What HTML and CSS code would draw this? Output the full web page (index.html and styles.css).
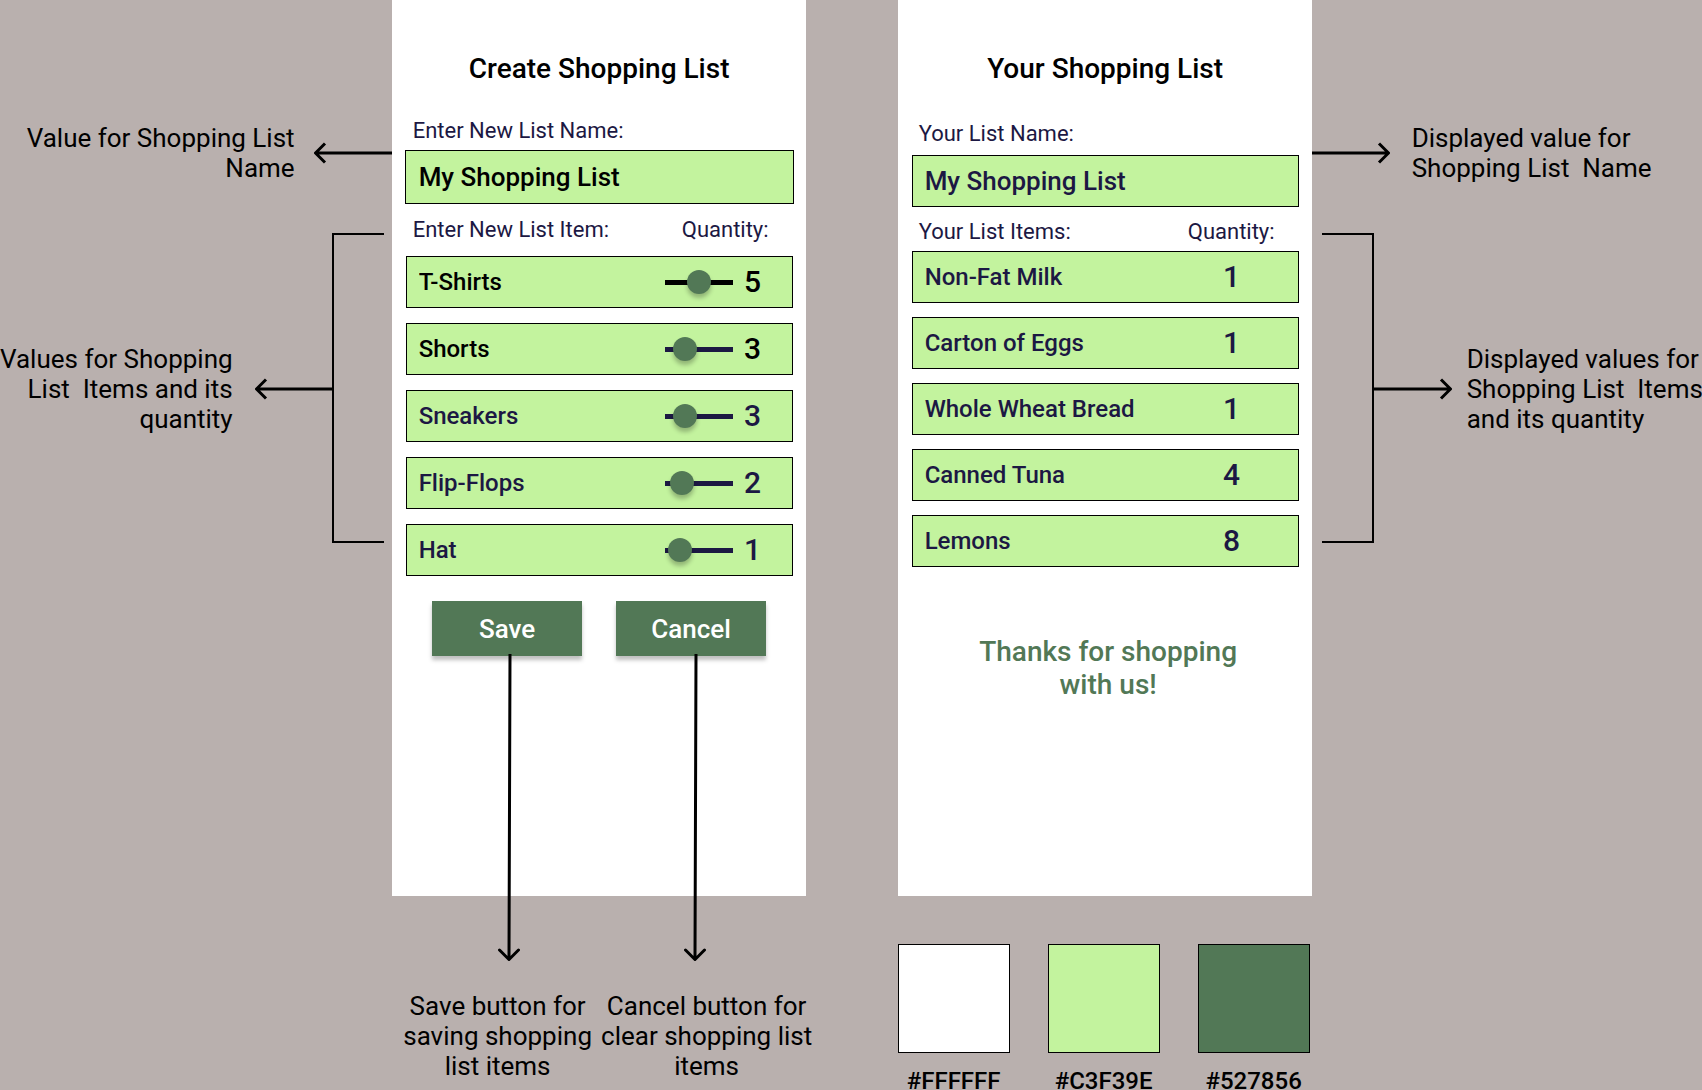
FILE: index.html
```html
<!DOCTYPE html>
<html lang="en">
<head>
<meta charset="utf-8">
<meta name="viewport" content="width=device-width, initial-scale=1">
<title>Shopping List Wireframe</title>
<link rel="stylesheet" href="styles.css">
</head>
<body>
<main class="board">
  <aside class="notes notes-left">
    <div class="note note-name">
      <p class="note-text">Value for Shopping List<br>Name</p>
      <svg class="arrow" width="78" height="24" viewBox="0 0 78 24" aria-hidden="true"><path d="M78 12H2M11 2.500L1.500 12L11 21.500"/></svg>
    </div>
    <div class="note note-items">
      <p class="note-text">Values for Shopping<br>List&nbsp; Items and its<br>quantity</p>
      <svg class="arrow" width="77" height="24" viewBox="0 0 77 24" aria-hidden="true"><path d="M77 12H2M11 2.500L1.500 12L11 21.500"/></svg>
      <div class="bracket"></div>
    </div>
  </aside>

  <form class="screen">
    <h1 class="screen-title">Create Shopping List</h1>
    <label class="caption caption-name" for="list-name">Enter New List Name:</label>
    <input class="field field-name" id="list-name" type="text" value="My Shopping List">
    <div class="caption caption-items"><span>Enter New List Item:</span><span>Quantity:</span></div>
    <ul class="items">
      <li class="item item-active track-active">
        <input class="item-name" type="text" value="T-Shirts" aria-label="Item 1">
        <input class="slider" id="q1" type="range" min="0" max="10" value="5" aria-label="T-Shirts quantity">
        <output class="count" for="q1">5</output>
      </li>
      <li class="item item-active">
        <input class="item-name" type="text" value="Shorts" aria-label="Item 2">
        <input class="slider" id="q2" type="range" min="0" max="15" value="3" aria-label="Shorts quantity">
        <output class="count" for="q2">3</output>
      </li>
      <li class="item">
        <input class="item-name" type="text" value="Sneakers" aria-label="Item 3">
        <input class="slider" id="q3" type="range" min="0" max="15" value="3" aria-label="Sneakers quantity">
        <output class="count" for="q3">3</output>
      </li>
      <li class="item">
        <input class="item-name" type="text" value="Flip-Flops" aria-label="Item 4">
        <input class="slider" id="q4" type="range" min="0" max="15" value="2" aria-label="Flip-Flops quantity">
        <output class="count" for="q4">2</output>
      </li>
      <li class="item">
        <input class="item-name" type="text" value="Hat" aria-label="Item 5">
        <input class="slider" id="q5" type="range" min="0" max="15" value="1" aria-label="Hat quantity">
        <output class="count" for="q5">1</output>
      </li>
    </ul>
    <div class="actions">
      <button class="button" type="button">Save</button>
      <button class="button" type="button">Cancel</button>
    </div>
    <svg class="connectors" width="414" height="310" viewBox="0 0 414 310" aria-hidden="true">
      <path d="M118 0L117 305M107.500 296L117 305.500L126.500 296"/>
      <path d="M304 0L303 305M293.500 296L303 305.500L312.500 296"/>
    </svg>
  </form>

  <section class="screen screen-view">
    <h1 class="screen-title">Your Shopping List</h1>
    <p class="caption caption-name">Your List Name:</p>
    <p class="field">My Shopping List</p>
    <div class="caption caption-items"><span>Your List Items:</span><span>Quantity:</span></div>
    <ul class="items">
      <li class="item"><span class="item-name">Non-Fat Milk</span><span class="count">1</span></li>
      <li class="item"><span class="item-name">Carton of Eggs</span><span class="count">1</span></li>
      <li class="item"><span class="item-name">Whole Wheat Bread</span><span class="count">1</span></li>
      <li class="item"><span class="item-name">Canned Tuna</span><span class="count">4</span></li>
      <li class="item"><span class="item-name">Lemons</span><span class="count">8</span></li>
    </ul>
    <p class="thanks">Thanks for shopping<br>with us!</p>
  </section>

  <aside class="notes notes-right">
    <div class="note note-name">
      <svg class="arrow" width="78" height="24" viewBox="0 0 78 24" aria-hidden="true"><path d="M0 12H76M67 2.500L76.500 12L67 21.500"/></svg>
      <p class="note-text">Displayed value for<br>Shopping List&nbsp; Name</p>
    </div>
    <div class="note note-items">
      <div class="bracket"></div>
      <svg class="arrow" width="78" height="24" viewBox="0 0 78 24" aria-hidden="true"><path d="M0 12H76M67 2.500L76.500 12L67 21.500"/></svg>
      <p class="note-text">Displayed values for<br>Shopping List&nbsp; Items<br>and its quantity</p>
    </div>
  </aside>

  <div class="button-notes">
    <p class="note-text">Save button for saving shopping list items</p>
    <p class="note-text">Cancel button for clear shopping list items</p>
  </div>

  <div class="palette">
    <figure class="swatch"><div class="chip chip-white"></div><figcaption>#FFFFFF</figcaption></figure>
    <figure class="swatch"><div class="chip chip-lime"></div><figcaption>#C3F39E</figcaption></figure>
    <figure class="swatch"><div class="chip chip-green"></div><figcaption>#527856</figcaption></figure>
  </div>
</main>
</body>
</html>
```
FILE: styles.css
```css
:root {
  --lime: #c3f39e;
  --green: #527856;
  --navy: #1c1843;
}

* {
  box-sizing: border-box;
  margin: 0;
}

body {
  background: #b9b0ae;
  color: #000;
  font-family: Roboto, sans-serif;
  font-size: 26px;
  line-height: 30px;
}

input,
button {
  font: inherit;
  color: inherit;
}

/* Two phone screens with margin notes on either side */
.board {
  display: grid;
  grid-template-columns: 392fr 414px 92px 414px 390fr;
  grid-template-rows: auto auto;
  min-height: 100vh;
  align-content: start;
  overflow: hidden;
}

.screen {
  position: relative;
  grid-column: 2;
  min-height: 896px;
  padding: 53px 13px 40px 14px;
  background: #fff;
}

.screen-view {
  grid-column: 4;
}

.screen-title {
  font-size: 28px;
  font-weight: 500;
  line-height: 32px;
  text-align: center;
}

.caption {
  display: flex;
  justify-content: space-between;
  padding: 0 24px 0 7px;
  color: var(--navy);
  font-size: 22px;
  line-height: 26px;
}

.caption-name {
  margin-top: 33px;
}

.caption-items {
  margin-top: 13px;
}

.field {
  display: flex;
  align-items: center;
  width: 100%;
  height: 52px;
  margin-top: 8px;
  padding: 0 12px;
  border: 1px solid #000;
  background: var(--lime);
  color: var(--navy);
  font-weight: 500;
}

.field-name {
  width: calc(100% + 2px);
  height: 54px;
  margin: 6px -1px 0;
  padding: 0 13px;
  color: #000;
}

.items {
  display: grid;
  grid-template-columns: minmax(0, 1fr);
  gap: 15px;
  margin-top: 13px;
  padding: 0;
  list-style: none;
}

.item {
  display: flex;
  align-items: center;
  height: 52px;
  padding: 0 29px 0 12px;
  border: 1px solid #000;
  background: var(--lime);
  color: var(--navy);
  font-weight: 500;
}

.item-active {
  color: #000;
}

.item-name {
  flex: 1;
  min-width: 0;
  padding: 0;
  border: 0;
  background: none;
  font-size: 24px;
}

.count {
  width: 20px;
  margin-left: 10px;
  font-size: 30px;
  text-align: center;
}

.slider {
  appearance: none;
  flex: none;
  width: 68px;
  height: 24px;
  margin: 0;
  background: linear-gradient(var(--navy), var(--navy)) 0 10px / 100% 5px no-repeat;
}

.track-active .slider {
  background-image: linear-gradient(#000, #000);
}

.slider::-webkit-slider-thumb {
  appearance: none;
  width: 24px;
  height: 24px;
  border: 0;
  border-radius: 50%;
  background: var(--green);
  box-shadow: 0 4px 4px rgba(0, 0, 0, 0.25);
}

.actions {
  display: flex;
  justify-content: center;
  gap: 34px;
  margin-top: 25px;
}

.button {
  width: 150px;
  height: 55px;
  padding: 0;
  border: 0;
  background: var(--green);
  box-shadow: 0 4px 4px rgba(0, 0, 0, 0.25);
  color: #fff;
  font-weight: 500;
}

.connectors,
.arrow {
  flex: none;
  fill: none;
  stroke: #000;
  stroke-width: 3;
  stroke-linecap: round;
  stroke-linejoin: round;
}

.arrow {
  stroke-linecap: butt;
}

/* Arrows that run from the buttons down past the screen edge */
.connectors {
  position: absolute;
  top: 654px;
  left: 0;
}

.screen-view .caption-name {
  margin-top: 36px;
}

.screen-view .caption-items {
  margin-top: 12px;
}

.screen-view .items {
  gap: 14px;
  margin-top: 6px;
}

.screen-view .item {
  padding-right: 56px;
}

.thanks {
  margin-top: 68px;
  padding-left: 6px;
  color: var(--green);
  font-size: 28px;
  font-weight: 500;
  line-height: 33px;
  text-align: center;
}

.notes {
  display: flex;
  flex-direction: column;
  padding-top: 123px;
  white-space: nowrap;
}

.notes-left {
  align-items: flex-end;
  text-align: right;
}

.notes-right {
  grid-column: 5;
}

.note {
  display: flex;
  align-items: center;
}

.note-items {
  margin-top: 50px;
}

.notes-left .note-name {
  gap: 19px;
}

.notes-left .note-items {
  margin-right: 8px;
}

.note-items .note-text,
.note-items .arrow {
  margin-top: 2px;
}

.notes-left .note-items .note-text {
  margin-right: 22px;
}

.notes-right .note-name {
  gap: 22px;
}

.notes-right .note-items {
  margin-left: 10px;
}

.notes-right .note-items .note-text {
  margin-left: 15px;
}

.bracket {
  flex: none;
  width: 52px;
  height: 310px;
  border: 2px solid #000;
}

.notes-left .bracket {
  border-right: 0;
}

.notes-right .bracket {
  border-left: 0;
}

.button-notes {
  display: grid;
  grid-column: 2;
  grid-template-columns: 200px 218px;
  margin: 95px -10px 0 6px;
  text-align: center;
}

.palette {
  display: grid;
  grid-column: 4;
  grid-template-columns: repeat(3, 112px);
  gap: 38px;
  margin-top: 48px;
}

.swatch {
  display: grid;
  gap: 19px;
  font-size: 24px;
  font-weight: 500;
  line-height: 18px;
  text-align: center;
}

.chip {
  height: 109px;
  border: 1px solid #000;
}

.chip-white {
  background: #fff;
}

.chip-lime {
  background: var(--lime);
}

.chip-green {
  background: var(--green);
}
```
